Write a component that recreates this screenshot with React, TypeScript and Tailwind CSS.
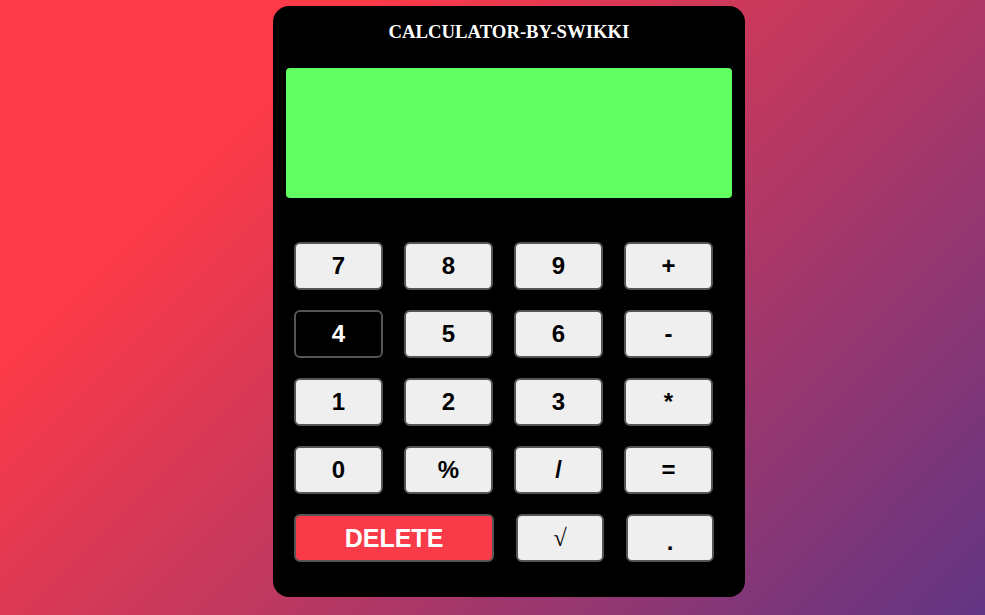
const rows = [
  ['7', '8', '9', '+'],
  ['4', '5', '6', '-'],
  ['1', '2', '3', '*'],
  ['0', '%', '/', '='],
];

function Key({ label, active }: { label: string; active?: boolean }) {
  return (
    <button
      className={`w-[89px] h-[48px] rounded-[6px] border-2 border-[#555555] text-[24px] font-bold leading-none font-['Liberation_Sans',Arial,sans-serif] ${
        active ? 'bg-black text-white' : 'bg-[#efefef] text-black'
      }`}
    >
      {label}
    </button>
  );
}

export default function App() {
  return (
    <div className="min-h-screen w-full bg-[linear-gradient(135deg,#fc3a48_23%,#623584_100%)] pt-[6px] pl-[273px]">
      <div className="w-[472px] h-[591px] bg-black rounded-[16px] flex flex-col">
        <h3 className="mt-[15px] text-center text-white font-bold text-[18.72px] leading-[22px] font-['Liberation_Serif','Times_New_Roman',serif]">
          CALCULATOR-BY-SWIKKI
        </h3>
        <div className="mt-[25px] mx-[13px] h-[130px] rounded-[4px] bg-[#61ff61]" />

        <div className="mt-[44px] pl-[21px] flex flex-col gap-[20px]">
          {rows.map((row, i) => (
            <div key={i} className="flex gap-[21px]">
              {row.map((k) => (
                <Key key={k} label={k} active={k === '4'} />
              ))}
            </div>
          ))}
          <div className="flex gap-[22px]">
            <button className="w-[200px] h-[48px] rounded-[6px] border-2 border-[#555555] bg-[#f93a48] text-white text-[25px] font-bold leading-none font-['Liberation_Sans',Arial,sans-serif]">
              DELETE
            </button>
            <button className="w-[88px] h-[48px] rounded-[6px] border-2 border-[#555555] bg-[#efefef] text-black text-[24px] leading-none font-['Liberation_Serif','DejaVu_Serif',serif]">
              √
            </button>
            <button className="w-[88px] h-[48px] rounded-[6px] border-2 border-[#555555] bg-[#efefef] text-black text-[24px] font-bold leading-none font-['Liberation_Sans',Arial,sans-serif] pt-[8px]">
              .
            </button>
          </div>
        </div>
      </div>
    </div>
  );
}
